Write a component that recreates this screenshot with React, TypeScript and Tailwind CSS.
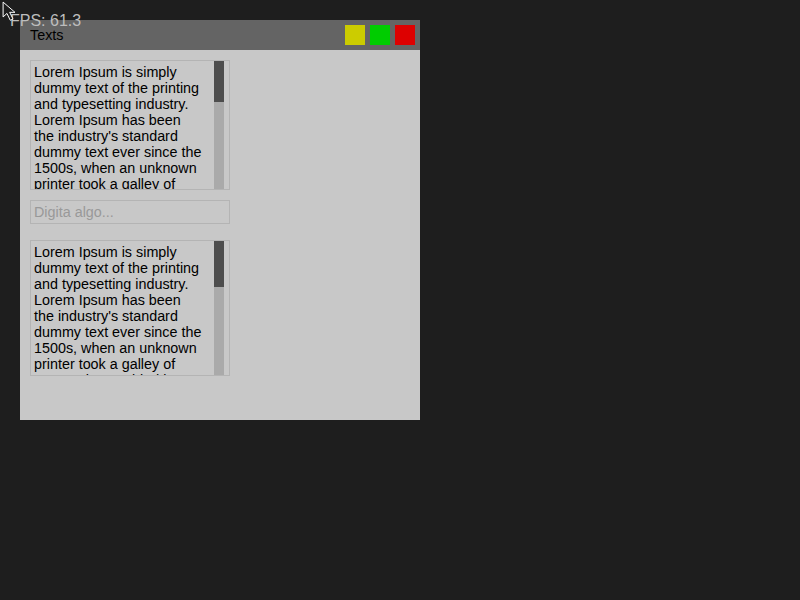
const LINES = [
    "Lorem Ipsum is simply",
    "dummy text of the printing",
    "and typesetting industry.",
    "Lorem Ipsum has been",
    "the industry's standard",
    "dummy text ever since the",
    "1500s, when an unknown",
    "printer took a galley of",
    "type and scrambled it to",
    "make a type specimen",
];

function TextBox({ height, thumb }: { height: string; thumb: string }) {
    return (
        <div className={`relative w-[200px] ${height} border border-[#b4b4b4] overflow-hidden`}>
            <div className="pl-[3px] pt-[3px] w-[183px] text-[14.35px] leading-[16px] text-black">
                {LINES.map((l) => (
                    <div key={l} className="whitespace-nowrap">
                        {l}
                    </div>
                ))}
            </div>
            <div className="absolute top-0 bottom-0 left-[183px] w-[10px] bg-[#aaaaaa]">
                <div className={`w-full ${thumb} bg-[#4d4d4d]`} />
            </div>
        </div>
    );
}

export default function App() {
    return (
        <div className="relative w-[800px] h-[600px] bg-[#1e1e1e] font-['Liberation_Sans',Arial,sans-serif]">
            <div className="absolute left-5 top-5 w-[400px] h-[400px] bg-[#c8c8c8] flex flex-col">
                <div className="h-[30px] bg-[#646464] flex items-center pl-[10px] pr-[5px]">
                    <span className="text-[14.35px] text-black flex-1 pt-[2px]">Texts</span>
                    <div className="flex gap-[5px]">
                        <div className="w-5 h-5 bg-[#cccc00]" />
                        <div className="w-5 h-5 bg-[#00cc00]" />
                        <div className="w-5 h-5 bg-[#dd0000]" />
                    </div>
                </div>
                <div className="flex flex-col px-[10px] pt-[10px]">
                    <TextBox height="h-[130px]" thumb="h-[41px]" />
                    <div className="mt-[10px] w-[200px] h-[24px] border border-[#b4b4b4] flex items-center pl-[3px] pt-[2px] text-[14.35px] text-[#999999]">
                        Digita algo...
                    </div>
                    <div className="mt-4">
                        <TextBox height="h-[136px]" thumb="h-[46px]" />
                    </div>
                </div>
            </div>
            <div className="absolute left-[10px] top-[9px] text-[16px] text-[#bdbdbd]">FPS: 61.3</div>
            <svg className="absolute left-[2px] top-[1px]" width="22" height="22" viewBox="0 0 20 20">
                <path d="M1 1 L1 14.5 L4.5 11.3 L7.5 17.5 L10 16.4 L7 10.3 L11.8 10.3 Z" fill="#1e1e1e" stroke="#ffffff" strokeWidth="0.9" />
            </svg>
        </div>
    );
}
